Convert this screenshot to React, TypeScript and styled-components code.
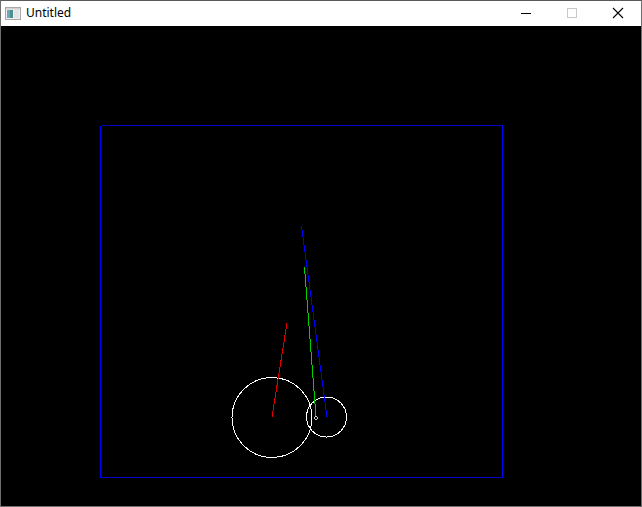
import React from "react";
import styled, { createGlobalStyle } from "styled-components";

const Global = createGlobalStyle`
  html, body { margin: 0; padding: 0; background: #000; overflow: hidden; }
  #root { width: 642px; height: 507px; }
`;

const Window = styled.div`
  box-sizing: border-box;
  width: 642px;
  height: 507px;
  border: 1px solid #6e6e6e;
  border-top-color: #5a5a5a;
  display: flex;
  flex-direction: column;
  background: #000;
`;

const TitleBar = styled.div`
  height: 25px;
  flex: none;
  background: #fff;
  display: flex;
  align-items: center;
`;

const AppIcon = styled.div`
  width: 16px;
  height: 16px;
  margin-left: 4px;
  margin-right: 5px;
  display: flex;
`;

const Title = styled.span`
  font-family: "Noto Sans", "Open Sans", sans-serif;
  font-size: 12px;
  color: #000;
  flex: 1;
  line-height: 1;
  margin-top: -2px;
`;

const CaptionButton = styled.div<{ $dim?: boolean }>`
  width: 46px;
  height: 25px;
  display: flex;
  align-items: center;
  justify-content: center;
  color: ${(p) => (p.$dim ? "#c8c8c8" : "#000")};
  margin-top: -2px;
`;

const Canvas = styled.svg`
  display: block;
  flex: 1;
  width: 640px;
  background: #000;
`;

export default function App() {
  return (
    <>
      <Global />
      <Window>
        <TitleBar>
          <AppIcon>
            <svg width="16" height="16" viewBox="0 0 16 16">
              <rect x="0.5" y="1.5" width="15" height="12" fill="#f0f0f0" stroke="#a9a9a9" />
              <rect x="2" y="4" width="6" height="8" fill="#4f8f8f" />
              <rect x="2" y="4" width="3" height="8" fill="#6aa7b8" />
              <rect x="9" y="4" width="5" height="8" fill="#e4e4e4" />
              <rect x="1" y="2" width="14" height="1.5" fill="#d0d0d0" />
            </svg>
          </AppIcon>
          <Title>Untitled</Title>
          <CaptionButton>
            <svg width="12" height="12" viewBox="0 0 12 12" shapeRendering="crispEdges">
              <line x1="1" y1="6.5" x2="11" y2="6.5" stroke="currentColor" strokeWidth="1" />
            </svg>
          </CaptionButton>
          <CaptionButton $dim>
            <svg width="12" height="12" viewBox="0 0 12 12" shapeRendering="crispEdges">
              <rect x="1.5" y="1.5" width="9" height="9" fill="none" stroke="currentColor" strokeWidth="1" />
            </svg>
          </CaptionButton>
          <CaptionButton>
            <svg width="12" height="12" viewBox="0 0 12 12">
              <path d="M1 1 L11 11 M11 1 L1 11" stroke="currentColor" strokeWidth="1.1" fill="none" />
            </svg>
          </CaptionButton>
        </TitleBar>
        <Canvas viewBox="1 26 640 480" preserveAspectRatio="none" shapeRendering="crispEdges">
          <line x1="100.5" y1="125.5" x2="502.5" y2="125.5" stroke="#0000c8" strokeWidth="1" />
          <line x1="100.5" y1="477.5" x2="502.5" y2="477.5" stroke="#0000c8" strokeWidth="1" />
          <line x1="100.5" y1="125.5" x2="100.5" y2="477.5" stroke="#0000ff" strokeWidth="1.4" />
          <line x1="502.5" y1="125.5" x2="502.5" y2="477.5" stroke="#0000ff" strokeWidth="1.4" />
          <circle cx="272" cy="417.5" r="40" fill="none" stroke="#fff" strokeWidth="1" />
          <circle cx="326.5" cy="417" r="20" fill="none" stroke="#fff" strokeWidth="1" />
          <line x1="287" y1="323" x2="272" y2="417" stroke="#e00000" strokeWidth="1" />
          <line x1="301.5" y1="226" x2="327" y2="417" stroke="#0000ff" strokeWidth="1" />
          <line x1="304.5" y1="267" x2="316" y2="417" stroke="#00d000" strokeWidth="1" />
          <circle cx="316" cy="418" r="1.3" fill="none" stroke="#fff" strokeWidth="0.8" />
        </Canvas>
      </Window>
    </>
  );
}
